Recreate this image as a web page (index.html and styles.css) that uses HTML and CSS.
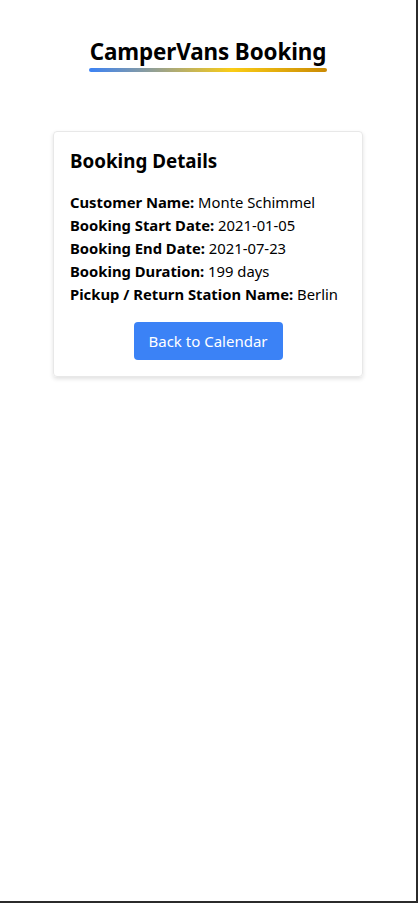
FILE: index.html
```html
<!DOCTYPE html>
<html lang="en">
<head>
<meta charset="utf-8">
<title>CamperVans Booking</title>
<link rel="stylesheet" href="styles.css">
</head>
<body>
<div class="frame">
  <header class="header">
    <h1 class="title">CamperVans Booking</h1>
  </header>
  <main class="main">
    <section class="card">
      <h2 class="card-title">Booking Details</h2>
      <ul class="details">
        <li><b>Customer Name:</b> Monte Schimmel</li>
        <li><b>Booking Start Date:</b> 2021-01-05</li>
        <li><b>Booking End Date:</b> 2021-07-23</li>
        <li><b>Booking Duration:</b> 199 days</li>
        <li><b>Pickup / Return Station Name:</b> Berlin</li>
      </ul>
      <div class="actions">
        <button class="btn" type="button">Back to Calendar</button>
      </div>
    </section>
  </main>
</div>
</body>
</html>
```
FILE: styles.css
```css
* { box-sizing: border-box; }
html, body { margin: 0; padding: 0; background: #2b2b2b; }
body {
  font-family: "Noto Sans", "Open Sans", sans-serif;
  color: #000;
}
.frame {
  width: 416px;
  height: 901px;
  background: #fff;
}
.header {
  display: flex;
  justify-content: center;
  padding-top: 36px;
}
.title {
  margin: 0;
  font-size: 22.4px;
  font-weight: 700;
  line-height: 32px;
  padding-bottom: 4px;
  letter-spacing: -0.1px;
}
.title::after {
  content: "";
  display: block;
  height: 4px;
  border-radius: 2px;
  margin: 0 -1px;
  background: linear-gradient(90deg, #3b82f6 0%, #9ca38a 30%, #facc15 60%, #ca8a04 100%);
}
.main {
  display: flex;
  justify-content: center;
  padding-top: 55px;
}
.card {
  width: 310px;
  border: 1px solid #e8e8e8;
  border-radius: 4px;
  box-shadow: 0 2px 4px rgba(0,0,0,0.12);
  padding: 15px 16px 16px 16px;
}
.card-title {
  margin: 0 0 16px;
  font-size: 18.8px;
  line-height: 28px;
  font-weight: 700;
}
.details {
  list-style: none;
  margin: 0;
  padding: 0;
  font-size: 14.8px;
  line-height: 23px;
}
.details b { font-weight: 700; }
.actions {
  display: flex;
  justify-content: center;
  margin-top: 16px;
}
.btn {
  font-family: inherit;
  font-size: 15px;
  color: #fff;
  background: #3b82f6;
  border: 0;
  border-radius: 4px;
  width: 149px;
  height: 38px;
  padding: 0;
}
```
